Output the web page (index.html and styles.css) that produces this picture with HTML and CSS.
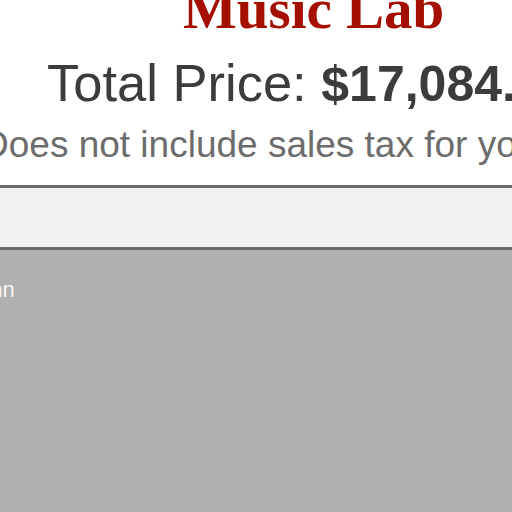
FILE: index.html
```html
<!DOCTYPE html>
<html lang="en">
<head>
<meta charset="utf-8">
<title>Music Lab – Total Price</title>
<link rel="stylesheet" href="styles.css">
</head>
<body>
<div class="page">
  <h1 class="brand">Music Lab</h1>
  <p class="total">Total Price: <strong>$17,084.00</strong></p>
  <p class="note">Does not include sales tax for your location.</p>
  <div class="toolbar"></div>
  <div class="panel">
    <div class="panel-label">Column</div>
  </div>
</div>
</body>
</html>
```
FILE: styles.css
```css
html, body {
  margin: 0;
  padding: 0;
  background: #ffffff;
  overflow: hidden;
  height: 512px;
}

.page {
  width: 900px;
  display: flex;
  flex-direction: column;
}

.brand {
  margin: -19px 0 0 183px;
  font-family: "Liberation Serif", "Times New Roman", serif;
  font-weight: bold;
  font-size: 57px;
  line-height: 56px;
  color: #a50f00;
  white-space: nowrap;
}

.total {
  margin: 16px 0 0 47px;
  font-family: "Liberation Sans", Arial, sans-serif;
  font-size: 52.5px;
  line-height: 60px;
  color: #3c3c3c;
  white-space: nowrap;
}

.total strong {
  font-weight: bold;
  font-size: 50px;
}

.note {
  margin: 11px 0 0 -18px;
  font-family: "Liberation Sans", Arial, sans-serif;
  font-size: 37px;
  line-height: 40px;
  color: #6c6c6c;
  white-space: nowrap;
}

.toolbar {
  margin-top: 20px;
  height: 59px;
  background: #f1f1f1;
  border-top: 3px solid #6b6b6b;
  border-bottom: 3px solid #6b6b6b;
}

.panel {
  background: #b0b0b0;
  height: 400px;
  padding-top: 27px;
}

.panel-label {
  margin-left: -61px;
  font-family: "Liberation Sans", Arial, sans-serif;
  font-size: 22px;
  line-height: 26px;
  color: #f7f7f7;
  white-space: nowrap;
}
```
